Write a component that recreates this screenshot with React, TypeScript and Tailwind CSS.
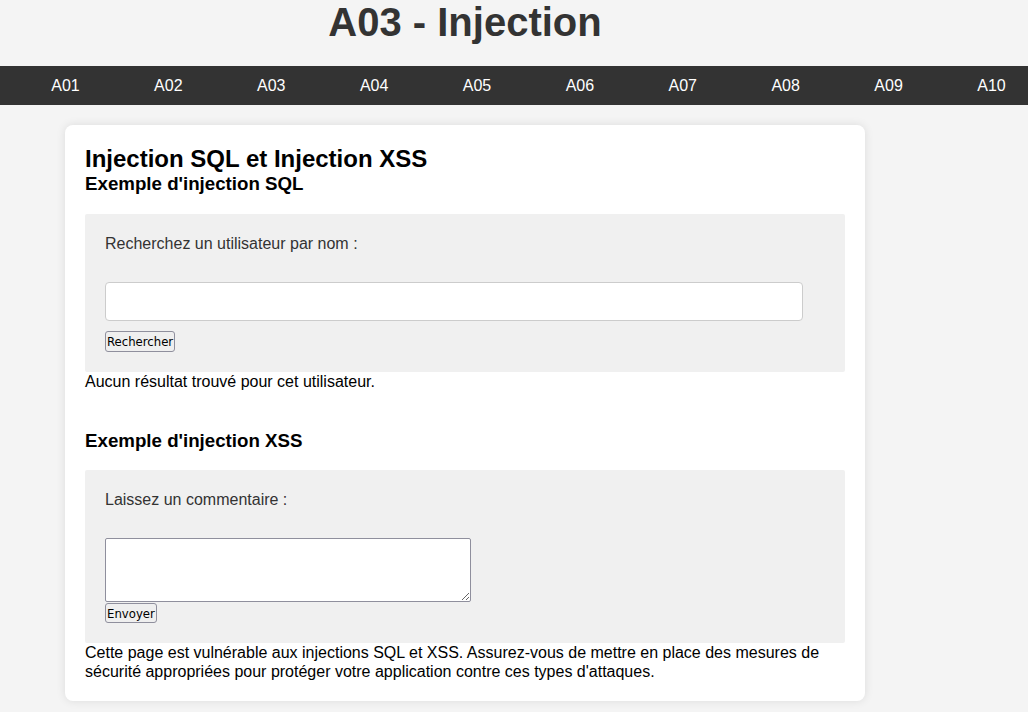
const navItems = ["A01", "A02", "A03", "A04", "A05", "A06", "A07", "A08", "A09", "A10"];

export default function App() {
  return (
    <div className="min-h-[712px] bg-[#f4f4f4] font-['Liberation_Sans',Arial,sans-serif] text-[16px] text-black">
      {/* en-tête */}
      <header className="h-[66px] w-[930px] text-center">
        <h1 className="m-0 text-[40px] leading-[normal] font-bold text-[#333]">A03 - Injection</h1>
      </header>

      {/* navigation */}
      <nav className="h-[39px] overflow-hidden bg-[#333]">
        <ul className="flex h-full items-center pl-[14px]">
          {navItems.map((item) => (
            <li key={item} className="w-[102.9px] shrink-0 text-center">
              <a href="#" className="text-[16px] text-white">
                {item}
              </a>
            </li>
          ))}
        </ul>
      </nav>

      <main className="pt-5 pb-[11px]">
        <div className="ml-[65px] w-[800px] rounded-lg bg-white p-5 shadow-[0_0_10px_rgba(0,0,0,0.1)]">
          <h2 className="text-[24px] leading-[normal] font-bold">Injection SQL et Injection XSS</h2>
          <h3 className="mb-[19px] text-[18.72px] leading-[normal] font-bold">Exemple d'injection SQL</h3>

          {/* formulaire SQL */}
          <form className="rounded-[2px] bg-[#f0f0f0] p-5" onSubmit={(e) => e.preventDefault()}>
            <label className="block leading-[19px] text-[#333]">Recherchez un utilisateur par nom :</label>
            <input
              type="text"
              className="mt-[29px] block h-[39px] w-[698px] rounded-[4px] border border-[#ccc] bg-white px-[10px]"
            />
            <button className="mt-[10px] block h-[21px] rounded-[3px] border border-[#8f8f9d] bg-[#efefef] px-[1px] font-['DejaVu_Sans_Condensed','DejaVu_Sans',sans-serif] text-[13px] leading-none text-black">
              Rechercher
            </button>
          </form>
          <p className="leading-[19px]">Aucun résultat trouvé pour cet utilisateur.</p>

          <h3 className="mt-[39px] mb-[18px] text-[18.72px] leading-[normal] font-bold">Exemple d'injection XSS</h3>

          {/* formulaire XSS */}
          <form className="rounded-[2px] bg-[#f0f0f0] p-5" onSubmit={(e) => e.preventDefault()}>
            <label className="block leading-[19px] text-[#333]">Laissez un commentaire :</label>
            <textarea className="mt-[29px] block h-[64px] w-[366px] rounded-[2px] border border-[#8f8f9d] bg-white" />
            <button className="mt-[1px] block h-[20px] rounded-[3px] border border-[#8f8f9d] bg-[#efefef] px-[1px] font-['DejaVu_Sans_Condensed','DejaVu_Sans',sans-serif] text-[13px] leading-none text-black">
              Envoyer
            </button>
          </form>
          <p className="leading-[19px]">
            Cette page est vulnérable aux injections SQL et XSS. Assurez-vous de mettre en place des mesures de sécurité
            appropriées pour protéger votre application contre ces types d'attaques.
          </p>
        </div>
      </main>
    </div>
  );
}
